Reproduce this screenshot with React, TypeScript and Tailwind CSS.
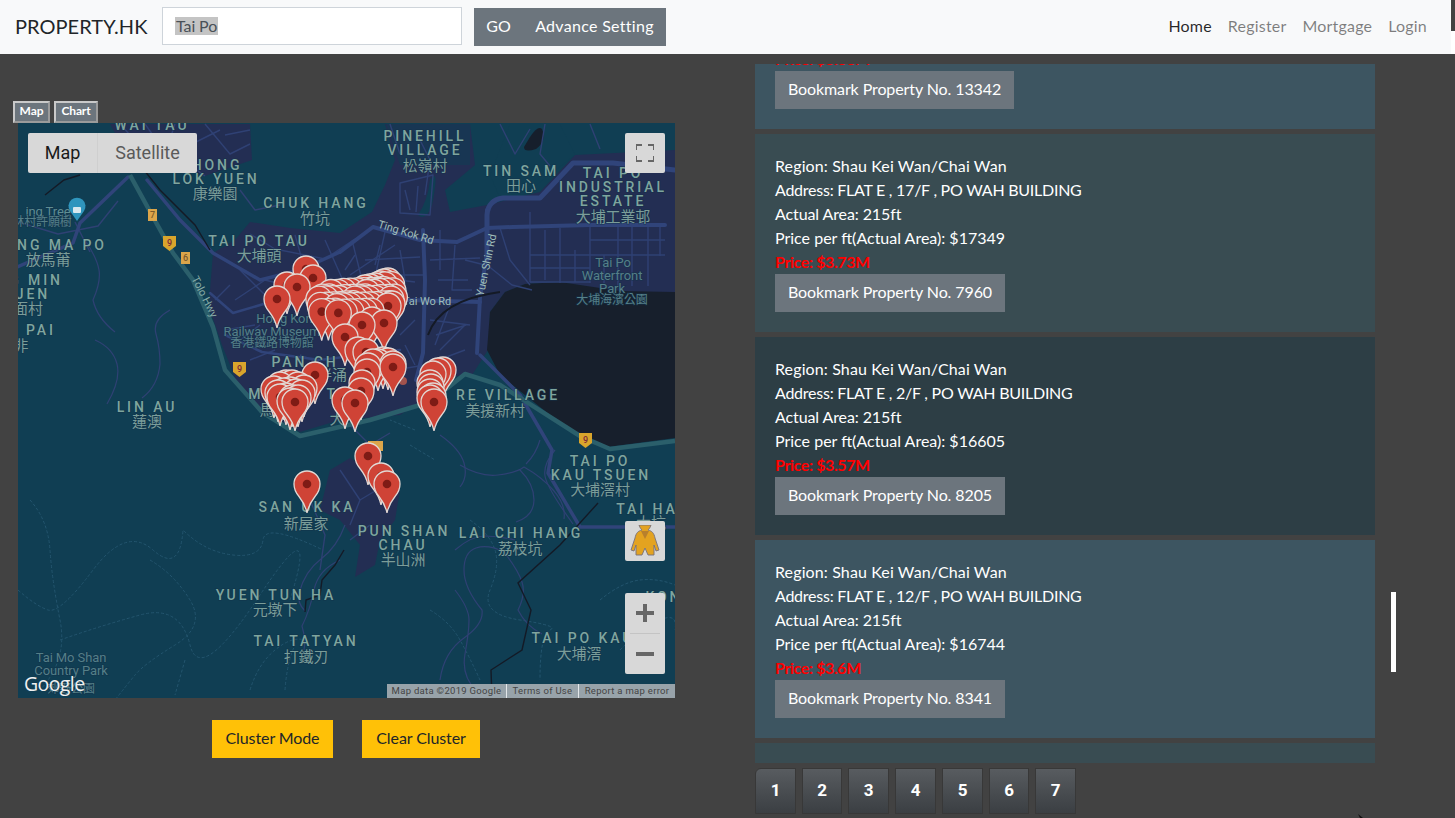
import React from "react";

type L = [string, number, number, number?];
// kind: 0 area latin, 1 cjk, 2 dim park, 3 dim cjk, 4 road
const labels: L[] = [
  ["WAI TAU", 152, 130, 0],
  ["PINEHILL", 425, 141, 0], ["VILLAGE", 425, 155, 0], ["松嶺村", 425, 171, 1],
  ["HONG", 217, 170, 0], ["LOK YUEN", 216, 184, 0], ["康樂園", 215, 199, 1],
  ["CHUK HANG", 316, 208, 0], ["竹坑", 315, 224, 1],
  ["TAI PO TAU", 259, 246, 0], ["大埔頭", 259, 261, 1],
  ["TIN SAM", 521, 176, 0], ["田心", 521, 191, 1],
  ["TAI PO", 613, 178, 0], ["INDUSTRIAL", 613, 192, 0], ["ESTATE", 613, 206, 0], ["大埔工業邨", 613, 222, 1],
  ["NG MA PO", 62, 250, 0], ["放馬莆", 48, 265, 1],
  ["G MIN", 36, 285, 0], ["JEN", 33, 299, 0], ["面村", 28, 314, 1], ["PAI", 41, 335, 0], ["非", 21, 351, 1],
  ["PAN CH", 305, 367, 0], ["泮涌", 332, 380, 1], ["MA", 262, 399, 0], ["馬", 267, 415, 1], ["TA", 338, 399, 0], ["大", 337, 424, 1],
  ["LIN AU", 147, 412, 0], ["蓮澳", 147, 427, 1],
  ["RE VILLAGE", 508, 400, 0], ["美援新村", 495, 416, 1],
  ["TAI PO", 600, 466, 0], ["KAU TSUEN", 601, 480, 0], ["大埔滘村", 600, 495, 1],
  ["TAI HA", 647, 514, 0], ["大坑", 651, 528, 1],
  ["SAN UK KA", 307, 512, 0], ["新屋家", 306, 529, 1],
  ["PUN SHAN", 404, 536, 0], ["CHAU", 403, 550, 0], ["半山洲", 403, 565, 1],
  ["LAI CHI HANG", 521, 538, 0], ["荔枝坑", 520, 554, 1],
  ["YUEN TUN HA", 276, 600, 0], ["元墩下", 275, 615, 1],
  ["TAI TATYAN", 306, 646, 0], ["打鐵刃", 306, 662, 1],
  ["TAI PO KAU", 583, 643, 0], ["大埔滘", 579, 659, 1], ["KON", 664, 602, 0],
];
const dim: L[] = [
  ["Hong Kong", 288, 323, 2], ["Railway Museum", 272, 336, 2], ["香港鐵路博物館", 272, 347, 3],
  ["Tai Po", 613, 267, 2], ["Waterfront", 612, 280, 2], ["Park", 612, 293, 2], ["大埔海濱公園", 612, 304, 3],
  ["Tai Mo Shan", 71, 662, 2], ["Country Park", 71, 675, 2], ["郊野公園", 71, 693, 3],
  ["ing Tree", 48, 216, 4], ["林村許願樹", 42, 226, 3],
];

const streets = [
  "M120 124l20 22 35 8 30 22M145 124l25 35M175 124l-10 30M205 124l25 30 20-10M225 135l25-5M190 145l30-15",
  "M18 222l40 12 40 -8 20 -25M75 222l15 30",
  "M250 234l25 15 50 10 30-20M295 235l10 35M325 240l20 45M352 240l10 40M385 232l-10 45 40 5M395 245l-45 30",
  "M400 183l33-8 -3 40 -30 -2zM405 190l5 20M418 186l-2 26",
  "M365 260l55-3M425 275l-50 0M430 260l50-2M440 230l0 40M455 245l-3 45 20 0M465 260l20 5M380 245l-5 20M400 250l5 30M438 280l30 0M345 270l10 -15",
  "M530 212v70M545 230v50M560 228v55M575 250v32M590 226v57M604 255v28M618 226v60M632 226v60M648 226v60M660 226v30",
  "M530 255h135M530 268h60M530 282h60M590 240h75M500 228l10 32 20 25M487 265l25 20 20 5",
  "M430 320l40 5M436 335l30 -10M440 350l25 -25M450 305l-15 40M415 320l-15 15M405 345l10 20",
  "M235 300l30-20 40 10M240 340l20-15M225 330l30-5M250 360l25-10M300 355l25 10M395 370l30-5M425 365l40 -15M240 270l25 25M215 300l15 -15",
  "M350 425l20 20 20 -12M340 470l20 30 -10 25M360 500l25 -15M350 540l20 -15M310 500l15 35 -5 35",
  "M60 140l20 30M240 190l15 20 25 -5M415 130l15 30 -5 35M390 124l10 30M500 124l15 30 15 -25M545 124l-5 30 10 12M590 124l10 25",
];
const rivers = [
  "M85 240q12 18 14 30t-6 30q4 18 22 32M170 310q-18 10-14 24t4 30q-2 22-18 34M95 340q18 8 22 24t-10 40",
  "M340 560q-22 10-26 30t-12 36q4 14 2 24M345 525q-8 22-24 34t-22 34q-2 10 6 18",
  "M440 680q4-28 24-42t18-28q-18-22-18-40t12-22 28 4q14 18 18 30t-4 28q8 16 24 24M455 590q14 18 14 30t-4 34 12 38",
  "M460 465q20 12 38 10t26-8q18 10 30 24t10 28M520 470q14 14 14 30t-18 22M455 550q16-14 30-14t30 4",
  "M555 450q-12 14-10 26t28 48M440 435q20 14 24 28t-4 24M540 440q-4 14-14 24",
];
const trails = [
  "M18 590q18 16 30 20t45-40 60-20 30-20q22 22 50 25t30-15 60 10M30 500q18 20 20 50t10 70-20 70M150 560q24 14 40 40t-15 45-40 30-20 25",
  "M60 640q40-14 80-25t50 30 70-50 30 5M185 660l-10 35M250 690q8-26 25-40t30-10",
  "M430 610q20 12 30 30t20 40M470 520q20 14 25 30t-5 40 30 30 30 10-10 50M620 650q22-22 40-30t15 10M600 600q22-18 40-20t35 5",
  "M415 430l-25 -10M410 445l25 15M285 690q2-28 10-45",
];
const cluster: [number, number][] = [];
for (let x = 321; x <= 395; x += 6) {
  const top = 296 - (x - 321) * 0.14;
  const bottom = x > 372 ? 304 : 314;
  for (let y = top; y <= bottom; y += 5) {
    const j = ((x * 7 + Math.round(y) * 13) % 7) - 3;
    cluster.push([x + j * 0.7, y + j * 0.6]);
  }
}
const pins: [number, number][] = [
  [306, 269], [313, 278], [287, 285], [297, 287], [277, 299],
  ...cluster,
  [388, 281], [384, 282], [380, 284], [375, 286], [370, 287], [365, 288], [392, 304], [388, 306],
  [372, 320], [362, 325], [384, 323], [345, 337],
  [358, 350], [366, 352], [393, 364], [388, 361], [383, 360], [378, 362], [373, 362], [368, 366], [393, 367],
  [367, 372], [362, 383], [361, 391], [315, 375],
  [345, 400], [355, 403],
  [274, 389], [280, 385], [286, 383], [292, 383], [298, 385], [304, 388], [278, 393], [284, 391], [290, 390], [296, 392], [302, 393], [280, 397], [286, 396], [292, 398], [298, 398], [290, 401], [295, 402],
  [443, 370], [438, 371], [433, 374], [430, 383], [431, 387], [430, 392], [433, 396], [430, 398], [434, 402],
  [368, 456], [381, 476], [387, 484], [307, 484],
];
const sortedPins = [...pins].sort((a, b) => a[1] - b[1]);

function Label({ t }: { t: L }) {
  const [s, x, y, k] = t;
  const cls =
    k === 0 ? "text-[14px] font-medium tracking-[2.9px] fill-[#7fa59e]"
    : k === 1 ? "text-[15px] fill-[#7b9d99]"
    : k === 2 ? "text-[13px] fill-[#557f88]"
    : k === 3 ? "text-[12px] fill-[#557f88]"
    : "text-[13px] fill-[#5f8d93]";
  return (
    <text x={x} y={y} textAnchor="middle" className={cls} stroke="#12324a" strokeWidth="1.5" strokeOpacity="0.6" paintOrder="stroke">
      {s}
    </text>
  );
}

function MapSvg() {
  return (
    <svg viewBox="18 123 657 575" className="block w-full h-full font-['Roboto','Noto_Sans_CJK_TC',sans-serif]">
      <rect x="18" y="123" width="657" height="575" fill="#103e53" />
      {/* urban areas */}
      <g fill="#232e53">
        <path d="M110 124H250L252 160L205 176L175 165L130 160Z" />
        <path d="M213 253L235 240L250 222L290 228L340 233L372 212L385 185L395 160L385 124H470L475 165L445 190L450 212L487 205L540 192L575 155L675 150V292L620 292L560 282L525 284L505 292L490 312L488 350L472 375L432 378L430 395L400 415L340 420L300 432L265 412L238 385L222 345L210 310L210 290Z" />
        <path d="M330 470L350 458L400 490L395 520L380 540L375 565L355 577L360 545L340 520L320 510Z" />
      </g>
      <path d="M386 124H470L470 165L440 165L400 165Z" fill="#103e53" opacity="0.55" />
      <path d="M430 180Q440 165 432 205Q426 222 418 215Q428 200 430 180Z" fill="#103e53" />
      <path d="M510 124L560 124L575 155L530 190L500 198L490 175Z" fill="#103e53" />
      <path d="M530 137q8-12 12-8q5 12-6 20q-12 4-12-2z" fill="#161f2c" />
      {/* water */}
      <path d="M675 292L620 291L560 282L525 284L505 292L490 312L487 350L500 375L540 407L573 433L607 447L675 438Z" fill="#171f2c" />
      {/* trails */}
      <g fill="none" stroke="#2c5f7a" strokeWidth="1" strokeDasharray="3 2" opacity="0.7">
        {trails.map((d, i) => <path key={i} d={d} />)}
      </g>
      {/* streets */}
      <g fill="none" stroke="#2f4174" strokeWidth="1.4" strokeLinejoin="round">
        {streets.map((d, i) => <path key={i} d={d} />)}
        {rivers.map((d, i) => <path key={i} d={d} strokeWidth="1.2" />)}
      </g>
      {/* arterial */}
      <g fill="none" stroke="#30447a" strokeLinejoin="round" strokeLinecap="round">
        <path strokeWidth="4" d="M340 252L373 227L420 240L457 242L487 228L513 227L590 225L665 225" />
        <path strokeWidth="5" d="M487 260V215Q488 200 503 198H540L573 163H613L675 170" />
        <path strokeWidth="4" d="M487 210V253L480 297L477 353" />
        <path strokeWidth="4" d="M405 300L480 302" />
        <path strokeWidth="4" d="M423 230L425 280L423 353L416 380" />
        <path strokeWidth="3.5" d="M340 252L300 270L260 280L213 253L180 220L147 180" />
        <path strokeWidth="3.5" d="M128 177L80 223L73 243L17 267" />
        <path strokeWidth="3.5" d="M480 355L520 395L552 450L548 473L580 527H675" />
        <path strokeWidth="2.5" d="M210 293L233 313L267 303M225 335L262 352L320 360L400 350" />
      </g>
      {/* highway */}
      <path d="M130 175L153 217L173 253L193 280L213 327L225 370L262 412L300 436L370 420L430 402L465 374L500 385L580 436L610 449L675 441" fill="none" stroke="#2b5f6b" strokeWidth="4.5" strokeLinejoin="round" />
      {/* rail / black */}
      <g fill="none" stroke="#141a26" strokeWidth="1.4">
        <path d="M598 503L560 545L518 583L531 610L522 650L491 670L492 698" />
        <path d="M344 550L335 565L322 580L320 595L306 600L305 612" />
        <path d="M80 175L64 180L45 195" />
        <path d="M140 165L160 190L195 225L210 250" />
        <path d="M500 292Q440 300 428 335" strokeWidth="2" />
      </g>
      {/* texts */}
      {labels.map((t, i) => <Label key={i} t={t} />)}
      {dim.map((t, i) => <Label key={i} t={t} />)}
      <text x="204" y="300" textAnchor="middle" transform="rotate(63 204 297)" className="text-[11px] fill-[#86aaa5]">Tolo Hwy</text>
      <text x="406" y="236" textAnchor="middle" transform="rotate(17 406 232)" className="text-[11px] fill-[#9fbdb8]">Ting Kok Rd</text>
      <text x="486" y="269" textAnchor="middle" transform="rotate(-78 486 265)" className="text-[11px] fill-[#9fbdb8]">Yuen Shin Rd</text>
      <text x="427" y="305" textAnchor="middle" className="text-[11px] fill-[#9fbdb8]">Tai Wo Rd</text>
      {/* shields */}
      <g className="text-[9px] font-medium" textAnchor="middle">
        <rect x="148" y="209" width="9" height="12" fill="#dba54a" />
        <text x="152.5" y="218" fill="#7a5a2a">7</text>
        <path d="M163 236H176V246L169.5 251L163 246Z" fill="#d9a52c" />
        <text x="169.5" y="246" fill="#7c2a3a">9</text>
        <rect x="181" y="252" width="9" height="12" fill="#dba54a" />
        <text x="185.5" y="261" fill="#7a5a2a">6</text>
        <path d="M579 433H592V443L585.5 448L579 443Z" fill="#d9a52c" />
        <text x="585.5" y="443" fill="#7c2a3a">9</text>
        <path d="M233 362H246V372L239.5 377L233 372Z" fill="#d9a52c" />
        <text x="239.5" y="372" fill="#7c2a3a">9</text>
        <rect x="368" y="441" width="15" height="10" fill="#dba54a" />
        <circle cx="403" cy="381" r="4" fill="#a2534d" />
      </g>
      {/* POI */}
      <path d="M77 221L70 211A8.5 8.5 0 1 1 84 211Z" fill="#2f95bd" />
      <rect x="73" y="207" width="8" height="6" rx="1" fill="#d8e8ee" />
      {/* pins */}
      {sortedPins.map(([x, y], i) => (
        <g key={i} transform={`translate(${x} ${y})`}>
          <path
            d="M0 29C-1.5 21 -4 17.5 -8 12.5C-11 9 -13 5.5 -13 0A13 13 0 0 1 13 0C13 5.5 11 9 8 12.5C4 17.5 1.5 21 0 29Z"
            fill="#cf4336" stroke="#e2d8d4" strokeWidth="1.3"
          />
          <circle r="4.3" fill="#7e1b15" />
        </g>
      ))}
    </svg>
  );
}

function Fullscreen() {
  return (
    <svg width="18" height="18" viewBox="0 0 18 18" fill="none" stroke="#666" strokeWidth="2">
      <path d="M0 6V1H6M12 1H18V6M0 12V17H6M12 17H18V12" />
    </svg>
  );
}

function Pegman() {
  return (
    <svg width="32" height="32" viewBox="0 0 32 32">
      <path d="M10 0H22C21 3 20 4 19 5C23 6 25 8 26 13L30 25L27 26L25 20V30H19L16 23L13 30H7V20L5 26L2 25L6 13C7 8 9 6 13 5C12 4 11 3 10 0Z" fill="#e3a320" stroke="#77707a" strokeWidth="0.9" />
      <path d="M12 6L16 14L20 6Z" fill="#b8802c" />
    </svg>
  );
}

function Card({ region = "Shau Kei Wan/Chai Wan", addr, ppf, price, no, bg, btn }: { region?: string; addr: string; ppf: string; price: string; no: string; bg: string; btn: string }) {
  return (
    <div className={`${bg} px-5 py-5 h-[198px] shrink-0 text-white`}>
      <p className="h-6 leading-[23px] tracking-[0.12px]">Region: {region}</p>
      <p className="h-6 leading-[23px] tracking-[-0.25px]">Address: {addr}</p>
      <p className="h-6 leading-[23px]">Actual Area: 215ft</p>
      <p className="h-6 leading-[23px] tracking-[0px]">Price per ft(Actual Area): ${ppf}</p>
      <p className="h-6 leading-[23px] text-[#ff0000] font-bold tracking-[-0.4px]">Price: ${price}</p>
      <button className={`${btn} h-[38px] bg-[#6c757d] text-white text-center leading-[36px] pb-[2px]`}>Bookmark Property No. {no}</button>
    </div>
  );
}

const pages = [
  ["1", "w-[41px] rounded-tl-[6px]"], ["2", "w-[40px]"], ["3", "w-[41px]"], ["4", "w-[41px]"], ["5", "w-[41px]"], ["6", "w-[40px]"], ["7", "w-[41px]"],
];

export default function App() {
  return (
    <div className="relative w-[1455px] h-[818px] overflow-hidden bg-[#424242] text-[16px] font-['Lato',sans-serif] tracking-[-0.1px]">
      <div className="bg-white h-[54px] w-full">
        <nav className="w-[1451px] h-full bg-[#f8f9fa] flex items-center pl-[15px] pr-6">
          <span className="text-[20px] text-[#212529] w-[147px] tracking-[0.05px] mb-[2px]">PROPERTY.HK</span>
          <div className="w-[300px] h-[38px] bg-white border border-[#ced4da] flex items-center pl-3 text-[#495057] mb-[2px]">
            <span className="bg-[#c4c4c4] h-[18px] leading-[17px] px-[1px]">Tai Po</span>
          </div>
          <div className="ml-3 flex h-[38px] bg-[#6c757d] text-white">
            <span className="w-[49px] text-center leading-[36px]">GO</span>
            <span className="w-[143px] text-center leading-[36px] tracking-[0.3px]">Advance Setting</span>
          </div>
          <div className="ml-auto flex gap-4 text-[#0000007f] tracking-[0.2px] mb-[3px]">
            <span className="text-[#000000d9]">Home</span>
            <span>Register</span>
            <span>Mortgage</span>
            <span>Login</span>
          </div>
        </nav>
      </div>
      <div className="absolute right-0 top-0 w-[4px] h-[31px] bg-[#424242]" />

      <main className="flex">
        <section className="w-[755px] shrink-0 pt-[47px] pl-[13px]">
          <div className="flex gap-[4px] h-[22px]">
            {["Map", "Chart"].map((t) => (
              <span key={t} className={`${t === "Map" ? "w-[37px]" : "w-[44px]"} h-[22px] bg-[#6c757d] border-2 border-t-[#c9c9c9] border-l-[#c9c9c9] border-r-[#9b9b9b] border-b-[#9b9b9b] text-white text-[12px] font-bold text-center leading-[15px]`}>{t}</span>
            ))}
          </div>
          <div className="relative ml-[5px] w-[657px] h-[575px] overflow-hidden">
            <MapSvg />
            <div className="absolute left-[10px] top-[10px] flex h-10 w-[169px] bg-[#d8d8d8] rounded-[2px] font-['Roboto',sans-serif] text-[18px] tracking-normal">
              <span className="w-[70px] text-center leading-10 text-[#1a1a1a] border-r border-[#cfcfcf]">Map</span>
              <span className="flex-1 text-center leading-10 text-[#5a5a5a]">Satellite</span>
            </div>
            <div className="absolute right-[10px] top-[10px] w-10 h-10 bg-[#d8d8d8] rounded-[2px] flex items-center justify-center"><Fullscreen /></div>
            <div className="absolute right-[10px] top-[398px] w-10 h-10 bg-[#d8d8d8] rounded-[2px] flex items-center justify-center"><Pegman /></div>
            <div className="absolute right-[10px] top-[470px] w-10 h-[81px] bg-[#d8d8d8] rounded-[2px] flex flex-col items-center">
              <div className="h-10 flex items-center justify-center">
                <svg width="18" height="18" viewBox="0 0 18 18"><path d="M0 7H7V0H11V7H18V11H11V18H7V11H0Z" fill="#666" /></svg>
              </div>
              <div className="w-[30px] h-px bg-[#c4c4c4]" />
              <div className="h-10 flex items-center justify-center">
                <svg width="18" height="4" viewBox="0 0 18 4"><rect width="18" height="4" fill="#666" /></svg>
              </div>
            </div>
            <span className="absolute left-[6px] bottom-[2px] text-[#f0f0f0] text-[19.5px] font-['Open_Sans',sans-serif] font-medium tracking-[-0.6px] leading-[24px]">Google</span>
            <div className="absolute right-0 bottom-0 h-[14px] w-[288px] bg-[#98a3aa] flex text-[9.5px] leading-[14px] text-[#444] font-['Roboto',sans-serif] tracking-[0.3px] divide-x divide-[#e3e7ea]">
              <span className="w-[120px] text-center">Map data ©2019 Google</span>
              <span className="w-[72px] text-center">Terms of Use</span>
              <span className="flex-1 text-center">Report a map error</span>
            </div>
          </div>
          <div className="flex gap-[29px] mt-[22px] ml-[199px]">
            <button className="w-[121px] h-[38px] bg-[#ffc107] text-[#212529] text-center pb-[2px]">Cluster Mode</button>
            <button className="w-[118px] h-[38px] bg-[#ffc107] text-[#212529] text-center pb-[2px]">Clear Cluster</button>
          </div>
        </section>

        <section className="w-[620px] shrink-0 pt-[10px]">
          <div className="h-[699px] overflow-hidden">
            <div className="flex flex-col gap-[5px] -mt-[133px]">
              <Card addr="FLAT E , 16/F , PO WAH BUILDING" ppf="17000" price="3.66M" no="13342" bg="bg-[#3d5561]" btn="w-[239px]" />
              <Card addr="FLAT E , 17/F , PO WAH BUILDING" ppf="17349" price="3.73M" no="7960" bg="bg-[#394c52]" btn="w-[230px]" />
              <Card addr="FLAT E , 2/F , PO WAH BUILDING" ppf="16605" price="3.57M" no="8205" bg="bg-[#2d3e45]" btn="w-[230px]" />
              <Card addr="FLAT E , 12/F , PO WAH BUILDING" ppf="16744" price="3.6M" no="8341" bg="bg-[#3d5561]" btn="w-[230px]" />
              <div className="bg-[#394c52] h-[20px] shrink-0" />
            </div>
          </div>
          <div className="flex gap-[6px] mt-[5px]">
            {pages.map(([n, w]) => (
              <span key={n} className={`${w} h-[46px] bg-linear-to-b from-[#585c60] to-[#3b3f43] border border-[#383838] text-white font-['Roboto',sans-serif] font-bold text-[17px] flex items-center justify-center`}>{n}</span>
            ))}
          </div>
        </section>

        <div className="ml-[16px] mt-[538px] w-[5px] h-[80px] bg-white" />
      </main>

      <svg className="absolute left-[1358px] top-[814px]" width="8" height="4" viewBox="0 0 8 4"><path d="M0 0L5 4H2Z" fill="#111" /></svg>
    </div>
  );
}
